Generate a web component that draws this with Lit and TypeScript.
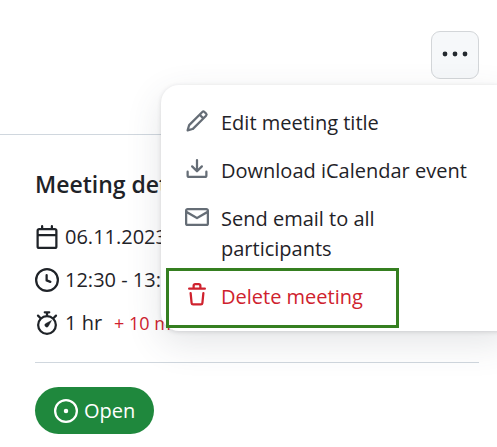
import { LitElement, html, css, svg } from "lit";
import { customElement } from "lit/decorators.js";

const icon = (body: unknown) =>
  html`<svg class="icon" viewBox="0 0 16 16" width="24" height="24" fill="currentColor" aria-hidden="true">${body}</svg>`;

const pencil = icon(svg`<path d="M11.013 1.427a1.75 1.75 0 0 1 2.474 0l1.086 1.086a1.75 1.75 0 0 1 0 2.474l-8.61 8.61c-.21.21-.47.364-.756.445l-3.251.93a.75.75 0 0 1-.927-.928l.929-3.25c.081-.286.235-.547.445-.758l8.61-8.61Zm.176 4.823L9.75 4.81l-6.286 6.287a.253.253 0 0 0-.064.108l-.558 1.953 1.953-.558a.253.253 0 0 0 .108-.064Zm1.238-3.763a.25.25 0 0 0-.354 0L10.811 3.75l1.439 1.44 1.263-1.263a.25.25 0 0 0 0-.354Z"/>`);
const download = icon(svg`<path d="M2.75 14A1.75 1.75 0 0 1 1 12.25v-2.5a.75.75 0 0 1 1.5 0v2.5c0 .138.112.25.25.25h10.5a.25.25 0 0 0 .25-.25v-2.5a.75.75 0 0 1 1.5 0v2.5A1.75 1.75 0 0 1 13.25 14Z"/><path d="M7.25 7.689V2a.75.75 0 0 1 1.5 0v5.689l1.97-1.969a.749.749 0 1 1 1.06 1.06l-3.25 3.25a.749.749 0 0 1-1.06 0L4.22 6.78a.749.749 0 1 1 1.06-1.06l1.97 1.969Z"/>`);
const mail = icon(svg`<path d="M1.75 2h12.5c.966 0 1.75.784 1.75 1.75v8.5A1.75 1.75 0 0 1 14.25 14H1.75A1.75 1.75 0 0 1 0 12.25v-8.5C0 2.784.784 2 1.75 2ZM1.5 12.251c0 .138.112.25.25.25h12.5a.25.25 0 0 0 .25-.25V5.809L8.38 9.397a.75.75 0 0 1-.76 0L1.5 5.809v6.442Zm13-8.181v-.32a.25.25 0 0 0-.25-.25H1.75a.25.25 0 0 0-.25.25v.32L8 7.88Z"/>`);
const trash = icon(svg`<path d="M11 1.75V3h2.25a.75.75 0 0 1 0 1.5H2.75a.75.75 0 0 1 0-1.5H5V1.75C5 .784 5.784 0 6.75 0h2.5C10.216 0 11 .784 11 1.75ZM4.496 6.675l.66 6.6a.25.25 0 0 0 .249.225h5.19a.25.25 0 0 0 .249-.225l.66-6.6a.75.75 0 0 1 1.492.149l-.66 6.6A1.748 1.748 0 0 1 10.595 15h-5.19a1.75 1.75 0 0 1-1.741-1.575l-.66-6.6a.75.75 0 1 1 1.492-.15ZM6.5 1.75V3h3V1.75a.25.25 0 0 0-.25-.25h-2.5a.25.25 0 0 0-.25.25Z"/>`);
const calendar = icon(svg`<path d="M4.75 0a.75.75 0 0 1 .75.75V2h5V.75a.75.75 0 0 1 1.5 0V2h1.25c.966 0 1.75.784 1.75 1.75v10.5A1.75 1.75 0 0 1 13.25 16H2.75A1.75 1.75 0 0 1 1 14.25V3.75C1 2.784 1.784 2 2.75 2H4V.75A.75.75 0 0 1 4.75 0ZM2.5 7.5v6.75c0 .138.112.25.25.25h10.5a.25.25 0 0 0 .25-.25V7.5Zm10.75-4H2.75a.25.25 0 0 0-.25.25V6h11V3.75a.25.25 0 0 0-.25-.25Z"/>`);
const clock = icon(svg`<path d="M8 0a8 8 0 1 1 0 16A8 8 0 0 1 8 0ZM1.5 8a6.5 6.5 0 1 0 13 0 6.5 6.5 0 0 0-13 0Zm7-3.25v2.992l2.028.812a.75.75 0 0 1-.557 1.392l-2.5-1A.751.751 0 0 1 7 8.25v-3.5a.75.75 0 0 1 1.5 0Z"/>`);
const stopwatch = icon(svg`<path d="M6.5.1h3a.75.75 0 0 1 0 1.5h-.75v1.6h-1.5V1.600H6.5a.75.75 0 0 1 0-1.500Z"/><circle cx="8" cy="9.300" r="5.900" fill="none" stroke="currentColor" stroke-width="1.500"/><path d="M2 3.100 3.600 4.700M14 3.100 12.400 4.700" fill="none" stroke="currentColor" stroke-width="1.500" stroke-linecap="round"/><path d="M11 6.300 8.900 10.100a1.250 1.250 0 1 1-1.750-1.700Z" stroke="currentColor" stroke-width=".3" stroke-linejoin="round"/>`);
const opened = icon(svg`<path d="M8 9.500a1.500 1.500 0 1 0 0-3 1.500 1.500 0 0 0 0 3Z"/><path d="M8 0a8 8 0 1 1 0 16A8 8 0 0 1 8 0ZM1.500 8a6.500 6.500 0 1 0 13 0 6.500 6.500 0 0 0-13 0Z"/>`);
const kebab = html`<svg viewBox="0 0 28 24" width="28" height="24" fill="currentColor" aria-hidden="true">${svg`<circle cx="4" cy="11" r="2.400"/><circle cx="14" cy="11" r="2.400"/><circle cx="24" cy="11" r="2.400"/>`}</svg>`;

@customElement("app-root")
export class AppRoot extends LitElement {
  static styles = css`
    :host {
      display: block;
      position: relative;
      min-height: 100vh;
      box-sizing: border-box;
      overflow: hidden;
      background: #fff;
      color: #1f2328;
      font: 20px/30px "Segoe UI", "Open Sans", "Noto Sans", sans-serif;
    }
    .header {
      display: flex;
      justify-content: flex-end;
      padding: 31px 18px 55px;
      border-bottom: 1px solid #d0d7de;
    }
    .more {
      display: grid;
      place-items: center;
      width: 48px;
      height: 48px;
      padding: 0;
      color: #24292f;
      background: #f6f8fa;
      border: 1px solid #d3d6d9;
      border-radius: 9px;
    }
    .details {
      padding: 34px 18px 12px 35px;
    }
    .title {
      margin: 0 0 23px;
      font-size: 23px;
      line-height: 30px;
      font-weight: 600;
    }
    .rows {
      display: grid;
      gap: 13px;
      margin: 0;
      padding: 0 0 24px;
      list-style: none;
      border-bottom: 1px solid #d0d7de;
    }
    .row {
      display: flex;
      align-items: center;
      gap: 6px;
      white-space: nowrap;
    }
    .icon {
      display: block;
      flex: none;
    }
    .extra {
      margin-left: 6px;
      font-size: 18px;
      color: #cf222e;
    }
    .state {
      display: inline-flex;
      align-items: center;
      gap: 6px;
      margin-top: 24px;
      padding: 9px 19px 8px;
      border-radius: 24px;
      color: #fff;
      background: #1f883d;
    }
    .menu {
      position: absolute;
      top: 85px;
      right: -16px;
      width: 352px;
      box-sizing: border-box;
      margin: 0;
      padding: 12px;
      list-style: none;
      background: #fff;
      border-radius: 18px;
      box-shadow: 0 1px 4px rgba(31, 35, 40, 0.15), 0 12px 36px rgba(66, 74, 83, 0.14);
    }
    .entry {
      position: relative;
    }
    .action {
      display: flex;
      align-items: flex-start;
      gap: 12px;
      width: 100%;
      padding: 11px 60px 7px 12px;
      border: 0;
      background: none;
      color: inherit;
      font: inherit;
      text-align: left;
    }
    .action .icon {
      margin-top: 1px;
      color: #656d76;
    }
    .action.danger .icon,
    .danger {
      color: #cf222e;
    }
    .wide {
      padding-right: 0;
    }
    .marker {
      position: absolute;
      inset: -3px 102px -9px -7px;
      border: 3px solid #357f20;
      pointer-events: none;
    }
  `;

  render() {
    return html`
      <header class="header">
        <button class="more" aria-label="More actions" aria-haspopup="true">${kebab}</button>
      </header>
      <main class="details">
        <h2 class="title">Meeting details</h2>
        <ul class="rows">
          <li class="row">${calendar}<span>06.11.2023</span></li>
          <li class="row">${clock}<span>12:30 - 13:30</span></li>
          <li class="row">${stopwatch}<span>1 hr</span><span class="extra">+ 10 min</span></li>
        </ul>
        <span class="state">${opened}<span>Open</span></span>
      </main>
      <ul class="menu">
        <li class="entry"><button class="action">${pencil}<span>Edit meeting title</span></button></li>
        <li class="entry"><button class="action wide">${download}<span>Download iCalendar event</span></button></li>
        <li class="entry"><button class="action">${mail}<span>Send email to all participants</span></button></li>
        <li class="entry">
          <button class="action danger">${trash}<span>Delete meeting</span></button>
          <span class="marker"></span>
        </li>
      </ul>
    `;
  }
}
